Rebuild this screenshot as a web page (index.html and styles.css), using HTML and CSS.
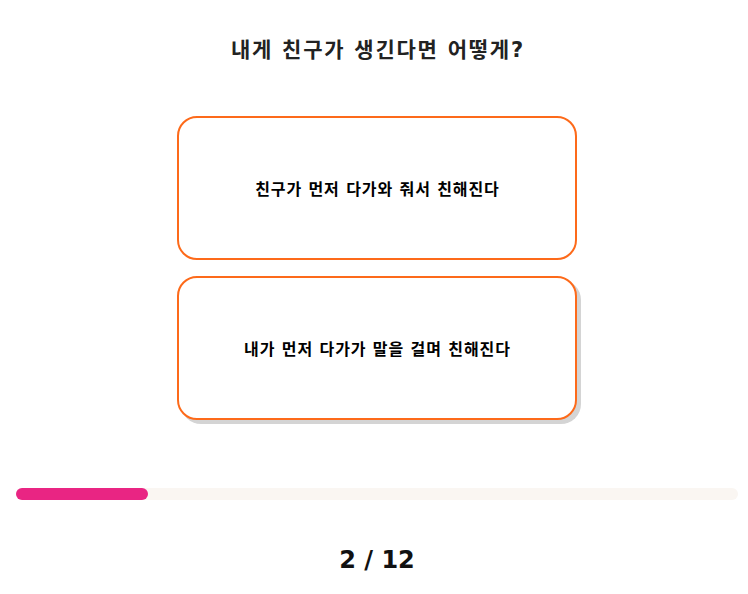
FILE: index.html
```html
<!DOCTYPE html>
<html lang="ko">
<head>
<meta charset="utf-8">
<link rel="stylesheet" href="styles.css">
</head>
<body>
<div class="page">
  <h1 class="question">내게 친구가 생긴다면 어떻게?</h1>
  <div class="choices">
    <button class="choice">친구가 먼저 다가와 줘서 친해진다</button>
    <button class="choice choice-hover">내가 먼저 다가가 말을 걸며 친해진다</button>
  </div>
  <div class="progress"><div class="progress-fill" style="width:18.3%"></div></div>
  <div class="counter">2 / 12</div>
</div>
</body>
</html>
```

FILE: styles.css
```css
html, body {
  margin: 0;
  padding: 0;
  background: #fff;
}
body {
  font-family: "DejaVu Sans", "Noto Sans CJK KR", sans-serif;
  color: #111;
}
.page {
  padding: 0 10px 0 16px;
  display: flex;
  flex-direction: column;
  align-items: center;
}
.question {
  margin: 35px 0 0;
  padding-left: 1.75px;
  font-size: 21px;
  font-weight: 700;
  line-height: 30px;
  letter-spacing: 1.75px;
  color: #222;
}
.choices {
  margin-top: 51px;
  display: flex;
  flex-direction: column;
  gap: 16px;
}
.choice {
  width: 400px;
  height: 144px;
  border: 2px solid #fd6a1a;
  border-radius: 20px;
  background: #fff;
  font-family: inherit;
  font-size: 16px;
  font-weight: 700;
  letter-spacing: 0.9px;
  color: #000;
  padding: 0 0 0 0.9px;
  cursor: pointer;
}
.choice-hover {
  box-shadow: 4px 4px 0 #d4d4d4;
}
.progress {
  align-self: stretch;
  margin-top: 68px;
  height: 12px;
  border-radius: 6px;
  background: #faf6f2;
}
.progress-fill {
  height: 100%;
  border-radius: 6px;
  background: #e92583;
}
.counter {
  margin-top: 42px;
  font-size: 24px;
  font-weight: 700;
  color: #111;
  line-height: 36px;
}
```
